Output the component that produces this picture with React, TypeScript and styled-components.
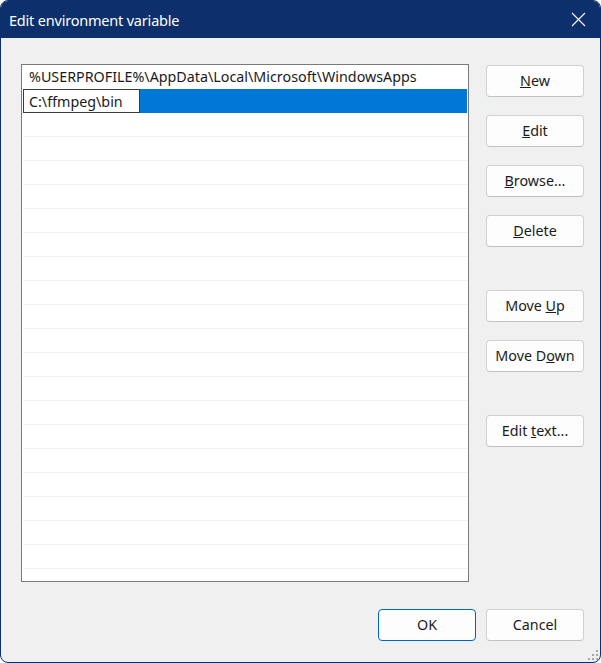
import React from "react";
import styled, { createGlobalStyle } from "styled-components";

const Global = createGlobalStyle`
  html, body { margin: 0; padding: 0; background: #ffffff; }
  body { font-family: "Noto Sans", "Open Sans", sans-serif; }
  * { box-sizing: border-box; }
`;

const Window = styled.div`
  position: relative;
  width: 601px;
  height: 663px;
  border: 1px solid #0d2f6b;
  border-radius: 8px;
  overflow: hidden;
  background: #f0f0f0;
  display: flex;
  flex-direction: column;
`;

const TitleBar = styled.div`
  height: 37px;
  flex: none;
  background: #0d2f6b;
  display: flex;
  align-items: center;
  justify-content: space-between;
  padding: 0 14px 0 8px;
  color: #ffffff;
`;

const Title = styled.div`
  font-family: "Noto Sans", sans-serif;
  font-size: 14.5px;
  letter-spacing: -0.2px;
  color: #ffffff;
`;

const CloseIcon = styled.svg`
  width: 15px;
  height: 15px;
  display: block;
`;

const Body = styled.div`
  flex: 1;
  display: flex;
  flex-direction: column;
  padding: 26px 16px 21px 20px;
`;

const Main = styled.div`
  display: flex;
  align-items: flex-start;
`;

const List = styled.div`
  width: 448px;
  height: 518px;
  border: 1px solid #7a7a7a;
  background: #ffffff;
  padding: 0 1px;
  overflow: hidden;
  display: flex;
  flex-direction: column;
`;

const Row = styled.div<{ $plain?: boolean }>`
  flex: none;
  height: 24px;
  display: flex;
  align-items: center;
  padding-left: 6px;
  border-bottom: 1px solid ${(p) => (p.$plain ? "transparent" : "#f0f0f0")};
  font-size: 14.3px;
  color: #1a1a1a;
  white-space: nowrap;
`;

const SelectedRow = styled.div`
  flex: none;
  height: 24px;
  display: flex;
  background: #0078d7;
`;

const EditBox = styled.div`
  width: 117px;
  height: 24px;
  background: #ffffff;
  border: 1px solid #3c3c3c;
  display: flex;
  align-items: center;
  padding-left: 5px;
  font-size: 14.3px;
  color: #1a1a1a;
  white-space: nowrap;
`;

const Buttons = styled.div`
  margin-left: 17px;
  margin-top: 1px;
  display: flex;
  flex-direction: column;
`;

const Button = styled.button<{ $gap?: number; $default?: boolean }>`
  width: 98px;
  height: 32px;
  margin-top: ${(p) => p.$gap ?? 0}px;
  background: #fdfdfd;
  border: 1px solid ${(p) => (p.$default ? "#0067c0" : "#d0d0d0")};
  border-bottom-color: ${(p) => (p.$default ? "#0067c0" : "#c2c2c2")};
  border-radius: 4px;
  font-family: "Noto Sans", sans-serif;
  font-size: 14.3px;
  color: #1b1b1b;
  padding: 0 0 1px;
  display: flex;
  align-items: center;
  justify-content: center;
  white-space: nowrap;
`;

const Label = styled.span`
  white-space: pre;
`;

const Footer = styled.div`
  margin-top: 27px;
  display: flex;
  justify-content: flex-end;
  gap: 10px;
`;

const Grip = styled.svg`
  position: absolute;
  right: 1px;
  bottom: 1px;
  width: 13px;
  height: 13px;
`;

export default function App() {
  const emptyRows = Array.from({ length: 20 });
  return (
    <>
      <Global />
      <Window>
        <TitleBar>
          <Title>Edit environment variable</Title>
          <CloseIcon viewBox="0 0 15 15">
            <path d="M1 1 L14 14 M14 1 L1 14" stroke="#ffffff" strokeWidth="1.1" fill="none" />
          </CloseIcon>
        </TitleBar>
        <Body>
          <Main>
            <List>
              <Row $plain>%USERPROFILE%\AppData\Local\Microsoft\WindowsApps</Row>
              <SelectedRow>
                <EditBox>C:\ffmpeg\bin</EditBox>
              </SelectedRow>
              {emptyRows.map((_, i) => (
                <Row key={i} />
              ))}
            </List>
            <Buttons>
              <Button><Label><u>N</u>ew</Label></Button>
              <Button $gap={18}><Label><u>E</u>dit</Label></Button>
              <Button $gap={18}><Label><u>B</u>rowse...</Label></Button>
              <Button $gap={18}><Label><u>D</u>elete</Label></Button>
              <Button $gap={43}><Label>Move <u>U</u>p</Label></Button>
              <Button $gap={18}><Label>Move D<u>o</u>wn</Label></Button>
              <Button $gap={43}><Label>Edit <u>t</u>ext...</Label></Button>
            </Buttons>
          </Main>
          <Footer>
            <Button $default><Label>OK</Label></Button>
            <Button><Label>Cancel</Label></Button>
          </Footer>
        </Body>
        <Grip viewBox="0 0 13 13">
          {[
            [10, 2], [10, 6], [6, 6], [10, 10], [6, 10], [2, 10],
          ].map(([x, y], i) => (
            <rect key={i} x={x} y={y} width="2" height="2" fill="#a8a8a8" />
          ))}
        </Grip>
      </Window>
    </>
  );
}
